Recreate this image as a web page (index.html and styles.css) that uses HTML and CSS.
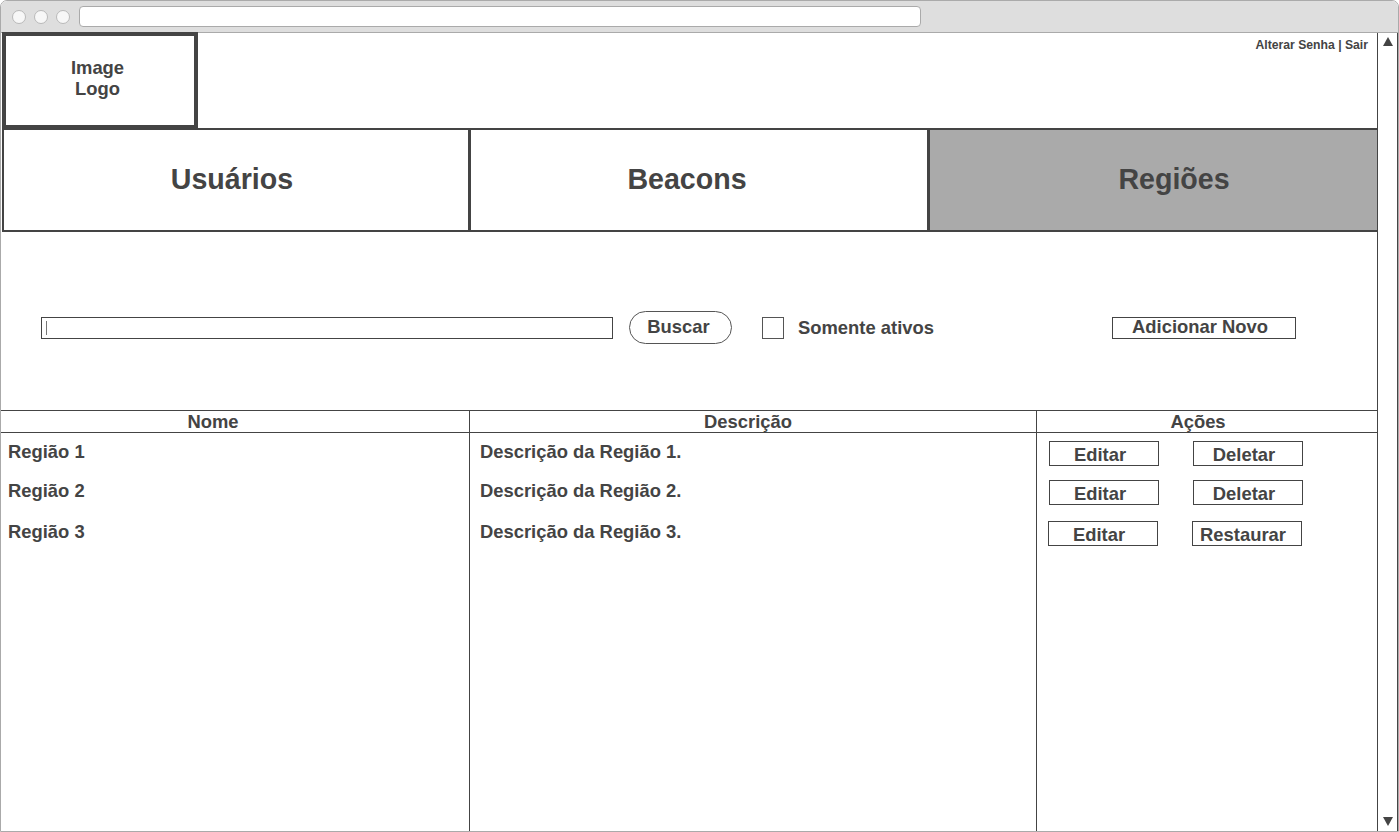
FILE: index.html
```html
<!DOCTYPE html>
<html lang="pt">
<head>
<meta charset="utf-8">
<title>Regiões</title>
<link rel="stylesheet" href="styles.css">
</head>
<body>
<div class="window">
  <div class="chrome">
    <div class="dots"><span class="dot"></span><span class="dot"></span><span class="dot"></span></div>
    <div class="url"></div>
  </div>
  <div class="viewport">
    <div class="page">
      <header class="header">
        <div class="logo"><span>Image<br>Logo</span></div>
        <div class="account">Alterar Senha | Sair</div>
      </header>
      <nav class="tabs">
        <div class="tab tab-1">Usuários</div>
        <div class="tab tab-2">Beacons</div>
        <div class="tab tab-3 active">Regiões</div>
      </nav>
      <div class="toolbar">
        <div class="search"><span class="caret"></span></div>
        <button class="btn-search">Buscar</button>
        <span class="checkbox"></span>
        <span class="check-label">Somente ativos</span>
        <button class="btn-add">Adicionar Novo</button>
      </div>
      <div class="table">
        <div class="th th-name">Nome</div>
        <div class="th th-desc col-b">Descrição</div>
        <div class="th th-act col-b">Ações</div>

        <div class="td td-name">Região 1</div>
        <div class="td td-desc col-b">Descrição da Região 1.</div>
        <div class="td td-act col-b"><button class="btn">Editar</button><button class="btn">Deletar</button></div>

        <div class="td td-name">Região 2</div>
        <div class="td td-desc col-b">Descrição da Região 2.</div>
        <div class="td td-act col-b"><button class="btn">Editar</button><button class="btn">Deletar</button></div>

        <div class="td td-name">Região 3</div>
        <div class="td td-desc col-b">Descrição da Região 3.</div>
        <div class="td td-act td-act-shift col-b"><button class="btn">Editar</button><button class="btn">Restaurar</button></div>

        <div class="filler"></div>
        <div class="filler col-b"></div>
        <div class="filler col-b"></div>
      </div>
    </div>
    <div class="scrollbar">
      <svg class="arrow" width="10" height="9" viewBox="0 0 10 9"><polygon points="5,0 10,9 0,9" fill="#444"/></svg>
      <svg class="arrow" width="10" height="9" viewBox="0 0 10 9"><polygon points="0,0 10,0 5,9" fill="#444"/></svg>
    </div>
  </div>
</div>
</body>
</html>
```
FILE: styles.css
```css
* { box-sizing: border-box; }
html, body { margin: 0; padding: 0; background: #fff; }
body {
  font-family: "Liberation Sans", Arial, sans-serif;
  font-weight: bold;
  color: #444;
}
.window {
  width: 1399px;
  height: 832px;
  border: 1px solid #aaa;
  border-radius: 7px 7px 0 0;
  display: flex;
  flex-direction: column;
  overflow: hidden;
}
.chrome {
  height: 32px;
  flex: none;
  background: #dedede;
  border-bottom: 1px solid #aaa;
  display: flex;
  align-items: center;
  padding-left: 11px;
}
.dots { display: flex; gap: 8px; }
.dot {
  width: 14px;
  height: 14px;
  border-radius: 50%;
  background: #f7f7f7;
  border: 1px solid #b9b9b9;
}
.url {
  margin-left: 9px;
  width: 842px;
  height: 21px;
  background: #fff;
  border: 1px solid #aaa;
  border-radius: 4px;
}
.viewport {
  flex: 1;
  display: flex;
  min-height: 0;
}
.page {
  width: 1376px;
  display: flex;
  flex-direction: column;
}
.header {
  height: 95px;
  display: flex;
  justify-content: space-between;
  align-items: flex-start;
}
.logo {
  margin-left: 1px;
  margin-top: -1px;
  width: 196px;
  height: 97px;
  border: 4px solid #444;
  display: flex;
  align-items: center;
  justify-content: center;
  text-align: center;
  font-size: 18.4px;
  line-height: 21px;
  padding-right: 5px;
  padding-bottom: 6px;
  position: relative;
  z-index: 1;
  background: #fff;
}
.account {
  font-size: 12.2px;
  line-height: 14px;
  margin-top: 5px;
  margin-right: 9px;
}
.tabs {
  height: 104px;
  display: flex;
  padding-left: 1px;
}
.tab {
  height: 104px;
  border: 2px solid #444;
  display: flex;
  align-items: center;
  justify-content: center;
  font-size: 28.6px;
  line-height: 32px;
  background: #fff;
}
.tab-1 { width: 468px; padding-right: 8px; padding-bottom: 2px; }
.tab-2 { width: 460px; margin-left: -1px; padding-right: 24px; padding-bottom: 2px; }
.tab-3 { flex: 1; margin-left: -1px; padding-left: 41px; padding-bottom: 2px; border-right-width: 0; }
.tab.active { background: #aaa; }
.toolbar {
  height: 178px;
  display: flex;
  align-items: flex-start;
  padding: 79px 0 0 40px;
}
.search {
  margin-top: 6px;
  width: 572px;
  height: 22px;
  border: 1px solid #444;
  display: flex;
  align-items: center;
  padding-left: 4px;
}
.caret {
  width: 1px;
  height: 14px;
  background: #777;
}
button {
  font-family: inherit;
  font-weight: bold;
  color: #444;
  background: #fff;
  font-size: 18.4px;
  line-height: 20px;
  padding: 0;
  margin: 0;
  cursor: default;
}
.btn-search {
  margin-left: 16px;
  width: 103px;
  height: 33px;
  border: 1px solid #555;
  border-radius: 17px;
  padding-right: 4px;
  padding-bottom: 1px;
}
.checkbox {
  margin-left: 30px;
  margin-top: 6px;
  width: 22px;
  height: 22px;
  border: 1px solid #555;
}
.check-label {
  margin-left: 14px;
  margin-top: 6px;
  font-size: 18.4px;
  line-height: 21px;
}
.btn-add {
  margin-left: auto;
  margin-right: 81px;
  margin-top: 6px;
  width: 184px;
  height: 22px;
  border: 1px solid #444;
  padding-right: 8px;
  padding-bottom: 2px;
  line-height: 18px;
}
.table {
  flex: 1;
  display: grid;
  grid-template-columns: 468px 567px 1fr;
  grid-template-rows: 22px 39px 41px 41px 1fr;
  border-top: 1px solid #444;
  font-size: 18.4px;
  line-height: 20px;
}
.col-b { border-left: 1px solid #444; }
.th {
  border-bottom: 1px solid #444;
  text-align: center;
  line-height: 22px;
}
.th-name { padding-right: 44px; }
.th-desc { padding-right: 10px; }
.th-act { padding-right: 18px; }
.td { padding-top: 9px; }
.td-name { padding-left: 7px; }
.td-desc { padding-left: 10px; }
.td-act { display: flex; align-items: flex-start; padding-left: 12px; padding-top: 8px; gap: 34px; }
.td-act-shift { padding-left: 11px; }
.btn {
  width: 110px;
  height: 25px;
  border: 1px solid #444;
  padding: 2px 8px 0 0;
  line-height: 20px;
}
.scrollbar {
  width: 21px;
  border-left: 1px solid #444;
  border-right: 1px solid #444;
  display: flex;
  flex-direction: column;
  justify-content: space-between;
  align-items: center;
  padding: 4px 0 5px;
}
.arrow { display: block; }
```
